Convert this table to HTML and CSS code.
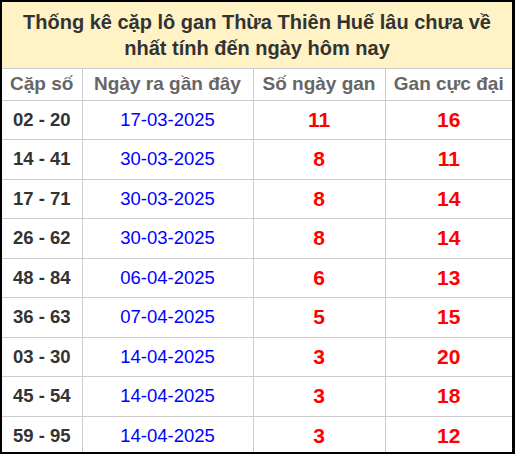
FILE: index.html
```html
<!DOCTYPE html>
<html lang="vi">
<head>
<meta charset="utf-8">
<link rel="stylesheet" href="styles.css">
</head>
<body>
<div class="frame">
<table class="gan">
<colgroup><col class="c1"><col class="c2"><col class="c3"><col class="c4"></colgroup>
<thead>
<tr><th colspan="4" class="title">Thống kê cặp lô gan Thừa Thiên Huế lâu chưa về<br>nhất tính đến ngày hôm nay</th></tr>
<tr class="head"><th>Cặp số</th><th>Ngày ra gần đây</th><th>Số ngày gan</th><th>Gan cực đại</th></tr>
</thead>
<tbody>
<tr><td class="pair">02 - 20</td><td class="date">17-03-2025</td><td class="num">11</td><td class="num">16</td></tr>
<tr><td class="pair">14 - 41</td><td class="date">30-03-2025</td><td class="num">8</td><td class="num">11</td></tr>
<tr><td class="pair">17 - 71</td><td class="date">30-03-2025</td><td class="num">8</td><td class="num">14</td></tr>
<tr><td class="pair">26 - 62</td><td class="date">30-03-2025</td><td class="num">8</td><td class="num">14</td></tr>
<tr><td class="pair">48 - 84</td><td class="date">06-04-2025</td><td class="num">6</td><td class="num">13</td></tr>
<tr><td class="pair">36 - 63</td><td class="date">07-04-2025</td><td class="num">5</td><td class="num">15</td></tr>
<tr><td class="pair">03 - 30</td><td class="date">14-04-2025</td><td class="num">3</td><td class="num">20</td></tr>
<tr><td class="pair">45 - 54</td><td class="date">14-04-2025</td><td class="num">3</td><td class="num">18</td></tr>
<tr><td class="pair">59 - 95</td><td class="date">14-04-2025</td><td class="num">3</td><td class="num">12</td></tr>
</tbody>
</table>
</div>
</body>
</html>
```

FILE: styles.css
```css
html, body {
  margin: 0;
  padding: 0;
  background: #000;
}
.frame {
  box-sizing: border-box;
  width: 515px;
  height: 454px;
  border-style: solid;
  border-color: #000;
  border-width: 2px 3px 2px 2px;
  background: #fff;
  overflow: hidden;
}
.gan {
  width: 510px;
  border-collapse: collapse;
  table-layout: fixed;
  font-family: "Liberation Sans", Arial, sans-serif;
}
.c1 { width: 80px; }
.c2 { width: 171px; }
.c3 { width: 132px; }
.c4 { width: 127px; }
.gan th, .gan td {
  padding: 0;
  text-align: center;
  border: 1px solid #cccccc;
}
.gan tr > :first-child { border-left: none; }
.gan tr > :last-child { border-right: none; }
.title {
  background: #fff2c5;
  color: #333;
  font-size: 20px;
  font-weight: bold;
  line-height: 26px;
  height: 66px;
  border-top: none !important;
  box-sizing: border-box;
}
.head th {
  height: 31px;
  font-size: 19px;
  font-weight: bold;
  color: #666;
}
.gan tbody td {
  height: 38.5px;
}
.pair {
  font-size: 18.5px;
  font-weight: bold;
  color: #333;
}
.date {
  font-size: 18.5px;
  color: #0000ff;
}
.num {
  font-size: 21px;
  font-weight: bold;
  color: #ff0000;
}
```
